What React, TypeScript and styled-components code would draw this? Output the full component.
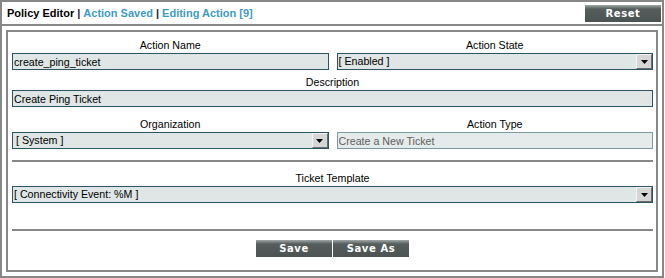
import styled, { createGlobalStyle } from 'styled-components';

const GlobalStyle = createGlobalStyle`
  html, body {
    margin: 0;
    padding: 0;
    background: #ffffff;
  }
  body {
    font-family: "Liberation Sans", Arial, sans-serif;
    font-size: 8pt;
    color: #000;
  }
`;

const Frame = styled.div`
  width: 664px;
  height: 278px;
  box-sizing: border-box;
  border: 2px solid #878787;
  background: #fff;
  display: flex;
  flex-direction: column;
`;

const Header = styled.div`
  height: 22px;
  flex: none;
  border-bottom: 2px solid #878787;
  display: flex;
  align-items: center;
  justify-content: space-between;
  padding: 0 1px 0 5px;
`;

const Title = styled.div`
  font-weight: bold;
  font-size: 11px;
  white-space: nowrap;
`;

const Crumb = styled.span`
  color: #3f9cc6;
`;

const Pipe = styled.span`
  color: #2a1a33;
  padding: 0 3px;
`;

const Button = styled.button<{ $width?: number }>`
  width: ${(p) => p.$width ?? 76}px;
  height: 17px;
  border: none;
  padding: 0;
  margin: 0;
  background: linear-gradient(
    to bottom,
    #a2a8a7 0px,
    #7a8281 2px,
    #555e5d 4px,
    #4b5453 100%
  );
  color: #fff;
  font-family: "DejaVu Sans", Verdana, sans-serif;
  font-size: 10px;
  font-weight: bold;
  letter-spacing: 0.6px;
  line-height: 17px;
  text-align: center;
  cursor: pointer;
`;

const Body = styled.div`
  flex: 1;
  padding: 4px;
  display: flex;
`;

const Panel = styled.div`
  flex: 1;
  border: 2px solid #878787;
  padding: 6px 3px 0 4px;
  display: flex;
  flex-direction: column;
`;

const Row = styled.div<{ $mt?: number; $cols?: number }>`
  display: grid;
  grid-template-columns: ${(p) => (p.$cols === 1 ? '1fr' : '1fr 1fr')};
  column-gap: 8px;
  margin-top: ${(p) => p.$mt ?? 0}px;
`;

const Field = styled.div`
  display: flex;
  flex-direction: column;
  min-width: 0;
`;

const Label = styled.div`
  text-align: center;
  line-height: 15px;
  height: 15px;
`;

const TextBox = styled.input<{ $disabled?: boolean }>`
  height: 17px;
  box-sizing: border-box;
  margin: 0;
  padding: 0 1px;
  border: 1px solid ${(p) => (p.$disabled ? '#7d9ba3' : '#2d5663')};
  background: ${(p) => (p.$disabled ? '#e5ebea' : '#dfe6e5')};
  color: ${(p) => (p.$disabled ? '#5e5e5e' : '#000')};
  font-family: inherit;
  font-size: 8pt;
  outline: none;
  width: 100%;
`;

const Select = styled.div`
  height: 17px;
  box-sizing: border-box;
  border: 1px solid #2d5663;
  background: #dfe6e5;
  display: flex;
  align-items: center;
`;

const SelectText = styled.span<{ $indent?: number }>`
  flex: 1;
  padding-left: ${(p) => p.$indent ?? 1}px;
  line-height: 15px;
  white-space: nowrap;
  overflow: hidden;
`;

const ArrowButton = styled.span`
  width: 16px;
  height: 15px;
  box-sizing: border-box;
  border: 1px solid;
  border-color: #f4f4f4 #6c6c6c #6c6c6c #f4f4f4;
  background: #d6d6d6;
  display: flex;
  align-items: flex-end;
  justify-content: center;
  padding-bottom: 4px;
`;

const Separator = styled.div<{ $mt: number }>`
  height: 2px;
  background: #878787;
  margin-top: ${(p) => p.$mt}px;
`;

const ButtonBar = styled.div`
  display: flex;
  justify-content: center;
  gap: 1px;
  margin-top: 9px;
`;

function Arrow() {
  return (
    <ArrowButton>
      <svg width="7" height="4" viewBox="0 0 7 4">
        <polygon points="0,0 7,0 3.5,4" fill="#000" />
      </svg>
    </ArrowButton>
  );
}

function Dropdown({ value, indent }: { value: string; indent?: number }) {
  return (
    <Select role="combobox">
      <SelectText $indent={indent}>{value}</SelectText>
      <Arrow />
    </Select>
  );
}

export default function App() {
  return (
    <>
      <GlobalStyle />
      <Frame>
        <Header>
          <Title>
            Policy Editor<Pipe>|</Pipe>
            <Crumb>Action Saved</Crumb>
            <Pipe>|</Pipe>
            <Crumb>Editing Action [9]</Crumb>
          </Title>
          <Button>Reset</Button>
        </Header>
        <Body>
          <Panel>
            <Row>
              <Field>
                <Label>Action Name</Label>
                <TextBox readOnly defaultValue="create_ping_ticket" />
              </Field>
              <Field>
                <Label>Action State</Label>
                <Dropdown value="[ Enabled ]" />
              </Field>
            </Row>
            <Row $mt={5} $cols={1}>
              <Field>
                <Label>Description</Label>
                <TextBox readOnly defaultValue="Create Ping Ticket" />
              </Field>
            </Row>
            <Row $mt={10}>
              <Field>
                <Label>Organization</Label>
                <Dropdown value="[ System ]" indent={3} />
              </Field>
              <Field>
                <Label>Action Type</Label>
                <TextBox readOnly $disabled defaultValue="Create a New Ticket" />
              </Field>
            </Row>
            <Separator $mt={11} />
            <Row $mt={9} $cols={1}>
              <Field>
                <Label>Ticket Template</Label>
                <Dropdown value="[ Connectivity Event: %M ]" />
              </Field>
            </Row>
            <Separator $mt={26} />
            <ButtonBar>
              <Button>Save</Button>
              <Button>Save As</Button>
            </ButtonBar>
          </Panel>
        </Body>
      </Frame>
    </>
  );
}
